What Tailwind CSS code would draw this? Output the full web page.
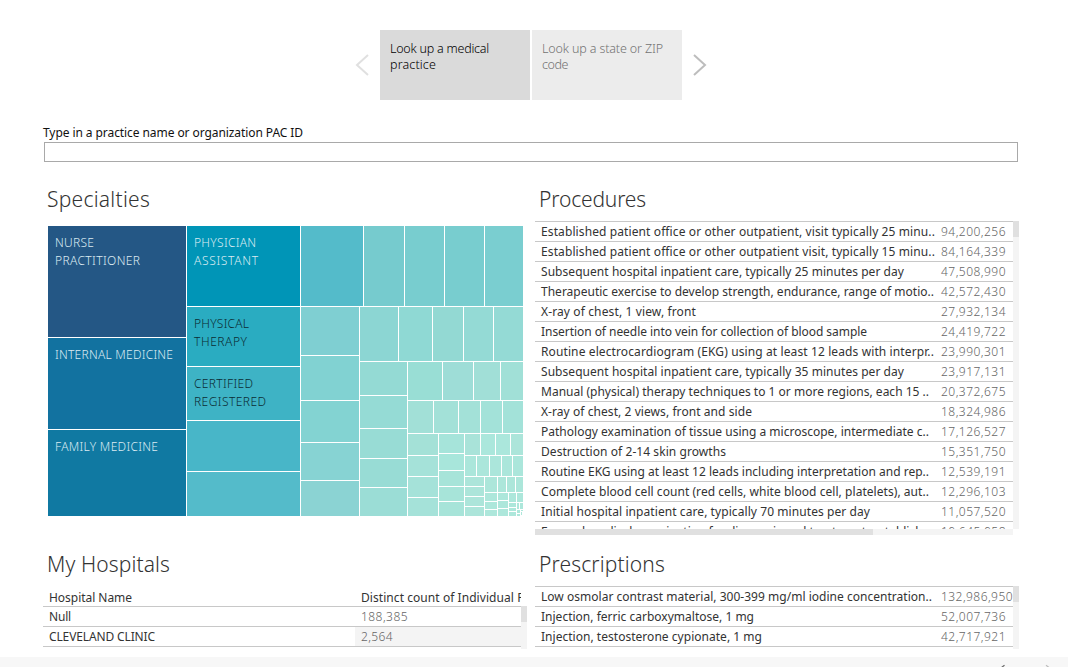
<!DOCTYPE html>
<html lang="en">
<head>
<meta charset="utf-8">
<title>Medical practices</title>
<script src="https://cdn.jsdelivr.net/npm/@tailwindcss/browser@4"></script>
</head>
<body class="bg-white font-['Noto_Sans','Open_Sans',sans-serif] text-[12px] text-[#333]">
<div class="flex h-[667px] w-[1068px] flex-col overflow-hidden">
  <nav class="flex h-[100px] shrink-0 items-start pt-[30px] pl-[355px]">
    <svg class="mt-[24px] mr-[10px] h-[22px] w-[15px]" viewBox="0 0 15 22" fill="none" stroke="#e0e0e0" stroke-width="2"><path d="M13 1 2 11 13 21"/></svg>
    <div class="mr-[2px] h-[70px] w-[150px] bg-[#dadada] px-[10px] pt-[11px] text-[12.5px] leading-[16px] font-[350] whitespace-nowrap text-black"><span data-w="99">Look up a medical</span><br><span data-w="46">practice</span></div>
    <div class="h-[70px] w-[150px] bg-[#ececec] px-[10px] pt-[11px] text-[12.5px] leading-[16px] font-[350] whitespace-nowrap text-[#737373]"><span data-w="121">Look up a state or ZIP</span><br><span data-w="26">code</span></div>
    <svg class="mt-[24px] ml-[10px] h-[22px] w-[15px]" viewBox="0 0 15 22" fill="none" stroke="#bdbdbd" stroke-width="2"><path d="M2 1 13 11 2 21"/></svg>
  </nav>
  <section class="mt-[24px] flex shrink-0 flex-col pl-[43px]">
    <label class="h-[18px] leading-[17px] text-[#111]"><span data-w="260">Type in a practice name or organization PAC ID</span></label>
    <input class="ml-px h-[20px] w-[974px] border border-[#a9a9a9] bg-white" aria-label="Practice">
  </section>
  <main class="flex h-[495px] shrink-0 pl-[43px]">
    <div class="w-[492px] pt-[21px]">
      <h2 class="h-[43px] pl-[4px] text-[21px] leading-[32px] font-[340]"><span data-w="103">Specialties</span></h2>
      <svg id="treemap" class="ml-[5px] h-[290px] w-[475px]" viewBox="48 226 475 290" shape-rendering="crispEdges"></svg>
      <h2 class="mt-[32px] h-[41px] pl-[4px] text-[21px] leading-[32px] font-[340]"><span data-w="123">My Hospitals</span></h2>
      <div class="flex">
        <div class="w-[478px] overflow-hidden whitespace-nowrap">
          <div class="flex h-[18px] border-b border-[#c8c8c8] leading-[17px] font-[450]"><span class="w-[312px] shrink-0 pl-[6px]"><span data-w="83">Hospital Name</span></span><span class="pl-[6px]"><span data-w="178">Distinct count of Individual PAC</span></span></div>
          <div class="flex h-[20px] border-b border-[#c8c8c8] leading-[20px]"><span class="w-[312px] pl-[6px] font-[450]"><span data-w="22">Null</span></span><span class="pl-[6px] font-light text-[#666]"><span data-w="47">188,385</span></span></div>
          <div class="flex h-[20px] border-b border-[#c8c8c8] leading-[20px]"><span class="w-[312px] pl-[6px] font-[450]"><span data-w="106">CLEVELAND CLINIC</span></span><span class="flex-1 bg-[#f4f4f4] pl-[6px] font-light text-[#666]"><span data-w="32">2,564</span></span></div>
        </div>
        <div class="mt-[17px] h-[43px] w-[6px] bg-[#f4f4f4]"><div class="h-[16px] bg-[#e0e0e0]"></div></div>
      </div>
    </div>
    <div class="w-[484px] pt-[21px]">
      <h2 class="h-[38px] pl-[4px] text-[21px] leading-[32px] font-[340]"><span data-w="107">Procedures</span></h2>
      <div class="flex"><div id="procedures" class="h-[308px] w-[478px] overflow-hidden border-t border-[#c8c8c8]"></div>
        <div class="h-[308px] w-[6px] bg-[#f4f4f4]"><div class="h-[16px] bg-[#e0e0e0]"></div></div></div>
      <div class="h-[6px] w-[478px] bg-[#f4f4f4]"><div class="h-[6px] w-[338px] bg-[#e0e0e0]"></div></div>
      <h2 class="mt-[13px] h-[38px] pl-[4px] text-[21px] leading-[32px] font-[340]"><span data-w="126">Prescriptions</span></h2>
      <div class="flex"><div id="prescriptions" class="w-[478px] overflow-hidden border-t border-[#c8c8c8]"></div>
        <div class="h-[63px] w-[6px] bg-[#f4f4f4]"><div class="h-[16px] bg-[#e0e0e0]"></div></div></div>
    </div>
  </main>
  <footer class="flex h-[10px] shrink-0 items-end bg-[#f7f7f7] pl-[1000px]">
    <svg class="h-[3px] w-[52px]" viewBox="0 0 52 3" fill="none" stroke-width="1.2"><path d="M1.5 3.5 4.5 1.2" stroke="#666"/><path d="m46 1.2 3 2.3" stroke="#bbb"/></svg>
  </footer>
</div>
<script>
const procedures = [
 ["Established patient office or other outpatient, visit typically 25 minu..",394,"94,200,256"],
 ["Established patient office or other outpatient visit, typically 15 minu..",394,"84,164,339"],
 ["Subsequent hospital inpatient care, typically 25 minutes per day",363,"47,508,990"],
 ["Therapeutic exercise to develop strength, endurance, range of motio..",393,"42,572,430"],
 ["X-ray of chest, 1 view, front",155,"27,932,134"],
 ["Insertion of needle into vein for collection of blood sample",326,"24,419,722"],
 ["Routine electrocardiogram (EKG) using at least 12 leads with interpr..",393,"23,990,301"],
 ["Subsequent hospital inpatient care, typically 35 minutes per day",363,"23,917,131"],
 ["Manual (physical) therapy techniques to 1 or more regions, each 15 ..",388,"20,372,675"],
 ["X-ray of chest, 2 views, front and side",211,"18,324,986"],
 ["Pathology examination of tissue using a microscope, intermediate c..",388,"17,126,527"],
 ["Destruction of 2-14 skin growths",185,"15,351,750"],
 ["Routine EKG using at least 12 leads including interpretation and rep..",388,"12,539,191"],
 ["Complete blood cell count (red cells, white blood cell, platelets), aut..",388,"12,296,103"],
 ["Initial hospital inpatient care, typically 70 minutes per day",329,"11,057,520"],
 ["Eye and medical examination for diagnosis and treatment, establish..",388,"10,645,058"]];
const prescriptions = [
 ["Low osmolar contrast material, 300-399 mg/ml iodine concentration..",391,"132,986,950"],
 ["Injection, ferric carboxymaltose, 1 mg",213,"52,007,736"],
 ["Injection, testosterone cypionate, 1 mg",221,"42,717,921"]];
const rows = list => list.map(([t, w, n]) =>
 `<div class="flex h-[20px] border-b border-[#c8c8c8] leading-[20px] whitespace-nowrap"><span class="w-[400px] shrink-0 pl-[6px] font-[450]"><span data-w="${w}">${t}</span></span><span class="pl-[6px] font-light text-[#666]"><span data-w="${n.length > 10 ? 72 : 65}">${n}</span></span></div>`).join('');
document.getElementById('procedures').innerHTML = rows(procedures);
document.getElementById('prescriptions').innerHTML = rows(prescriptions);

// Treemap: each strip lists its cell starts, ending with one past the last gap.
let cells = '';
const rect = (x, y, w, h, c) => cells += `<rect x="${x}" y="${y}" width="${w}" height="${h}" fill="${c}"/>`;
const col = (x0, x1, ys, cs) => ys.slice(1).forEach((y, i) => rect(x0, ys[i], x1 - x0, y - 1 - ys[i], cs[Math.min(i, cs.length - 1)]));
const row = (y0, y1, xs, cs) => xs.slice(1).forEach((x, i) => rect(xs[i], y0, x - 1 - xs[i], y1 - y0, cs[Math.min(i, cs.length - 1)]));
col(48, 186, [226,338,430,517], ['#245785','#1272a0','#1079a2']);
col(187, 300, [226,307,367,421,472,517], ['#0095b7','#2aacc1','#3eb3c5','#48b6c8','#54bbca']);
row(226, 306, [301,364,405,445,485,524], ['#54bbca','#76cbce','#78cdcf','#78cdcf','#7aced0']);
col(301, 359, [307,356,401,443,481,517], ['#7fcfd2','#81d2d2','#83d3d2','#87d3d3','#8bd3d3']);
row(307, 361, [360,399,433,464,494,524], ['#8cd6d3','#8fd9d4','#93d9d3','#94dad5']);
col(360, 407, [362,396,429,459,488,517], ['#94dad4','#95dbd5','#98dcd5','#98dcd5','#9bddd6']);
row(362, 400, [408,443,474,501,524], ['#99ded5','#9eddd7','#a1dfd7','#a1e0d7']);
row(401, 433, [408,434,459,481,503,524], ['#a2e0d7','#a3e1d8','#a3e1d8','#a3e2d9']);
col(408, 438, [434,456,477,498,517], ['#a4e1d7','#a5e2d9']);
col(439, 464, [434,454,471,487,502,517], ['#a6e4da','#a8e6db','#a7e4d9']);
row(434, 455, [465,481,496,511,524], ['#a9e3d9','#abe7dc','#abe7dc','#ace5da']);
row(456, 476, [465,477,490,502,513,524], ['#abe6db']);
col(465, 484, [477,487,497,507,517], ['#ace5da']);
row(477, 492, [485,498,507,516,524], ['#ace6da']);
col(485, 497, [493,502,510,517], ['#ade7db']);
col(498, 508, [493,501,509,517], ['#ade7db']);
col(509, 516, [493,503,508,512,517], ['#ade7db']);
row(493, 502, [517,524], ['#ade7db']);
row(503, 509, [517,520,524], ['#ade7db']);
col(517, 520, [510,514,517], ['#ade7db']);
rect(521, 510, 2, 1, '#ade7db'); rect(521, 512, 1, 3, '#ade7db');
[[55,247,'NURSE',39,1],[55,265,'PRACTITIONER',85,1],[55,359,'INTERNAL MEDICINE',118,1],[55,451,'FAMILY MEDICINE',103,1],
 [194,247,'PHYSICIAN',62,1],[194,265,'ASSISTANT',64,1],[194,328,'PHYSICAL',55,0],[194,346,'THERAPY',53,0],
 [194,388,'CERTIFIED',59,0],[194,406,'REGISTERED',72,0]].forEach(([x, y, t, w, light]) =>
  cells += `<text x="${x}" y="${y}" font-size="12" font-weight="340" fill="${light ? '#dcebf2' : '#0c2c34'}" textLength="${w}">${t}</text>`);
document.getElementById('treemap').innerHTML = cells;

function fit() {
  document.querySelectorAll('[data-w]').forEach(e => {
    e.style.letterSpacing = '0px';
    let s = 0;
    for (let i = 0; i < 3; i++) {
      s += (e.dataset.w - e.getBoundingClientRect().width) / e.textContent.length;
      e.style.letterSpacing = s + 'px';
    }
  });
}
fit();
window.addEventListener('load', () => { fit(); document.fonts.ready.then(fit); });
</script>
</body>
</html>
